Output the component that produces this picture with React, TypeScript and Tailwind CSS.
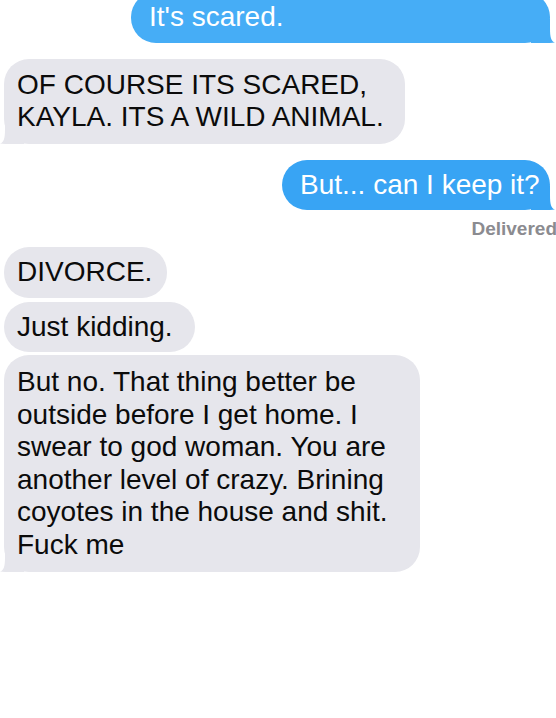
import type { ReactNode } from "react";

const FONT = { fontFamily: '"Liberation Sans", Arial, sans-serif' };

function TailLeft({ color }: { color: string }) {
  return (
    <svg
      className="absolute bottom-0 -left-[4px]"
      width="24"
      height="24"
      viewBox="0 0 24 24"
      fill={color}
    >
      <path d="M0 23.5 C4 22.5 5 18 5 9 L5 0 L24 0 L24 24 L12 24 C7 24 3 24 0 23.5 Z" />
    </svg>
  );
}

function TailRight({ color }: { color: string }) {
  return (
    <svg
      className="absolute bottom-0 -right-[5px]"
      width="24"
      height="24"
      viewBox="0 0 24 24"
      fill={color}
    >
      <path d="M24 23.5 C20 22.5 19 18 19 9 L19 0 L0 0 L0 24 L12 24 C17 24 21 24 24 23.5 Z" />
    </svg>
  );
}

function Received({
  children,
  tail,
  className,
}: {
  children: ReactNode;
  tail?: boolean;
  className: string;
}) {
  return (
    <div
      className={`relative self-start rounded-[25px] bg-[#e6e6ec] pl-[13px] text-[28px] leading-[32.5px] text-[#0b0b0b] ${className}`}
    >
      {tail && <TailLeft color="#e6e6ec" />}
      <p className="relative">{children}</p>
    </div>
  );
}

function Sent({
  children,
  color,
  className,
}: {
  children: ReactNode;
  color: string;
  className: string;
}) {
  return (
    <div
      className={`relative self-end rounded-[25px] py-[9px] pl-[18px] text-[28px] leading-[32.5px] text-white ${className}`}
      style={{ backgroundColor: color }}
    >
      <TailRight color={color} />
      <p className="relative">{children}</p>
    </div>
  );
}

export default function App() {
  return (
    <main
      className="flex h-[718px] w-[556px] flex-col overflow-hidden bg-white pl-[4px] pr-[6px]"
      style={FONT}
    >
      <Sent color="#46adf6" className="-mt-[8px] w-[419px]">
        It's scared.
      </Sent>

      <Received tail className="mt-[16px] w-[401px] py-[10px]">
        OF COURSE ITS SCARED,
        <br />
        KAYLA. ITS A WILD ANIMAL.
      </Received>

      <Sent color="#38a4f4" className="mt-[16px] w-[268px]">
        But... can I keep it?
      </Sent>

      <p className="-mr-[7px] mt-[8px] self-end text-[19px] font-bold leading-[22px] text-[#8b8b90]">
        Delivered
      </p>

      <Received className="mt-[7px] w-[163px] py-[9px]">DIVORCE.</Received>
      <Received className="mt-[4px] w-[191px] py-[9px]">Just kidding.</Received>
      <Received tail className="mt-[3px] w-[416px] py-[11px]">
        But no. That thing better be
        <br />
        outside before I get home. I
        <br />
        swear to god woman. You are
        <br />
        another level of crazy. Brining
        <br />
        coyotes in the house and shit.
        <br />
        Fuck me
      </Received>
    </main>
  );
}
